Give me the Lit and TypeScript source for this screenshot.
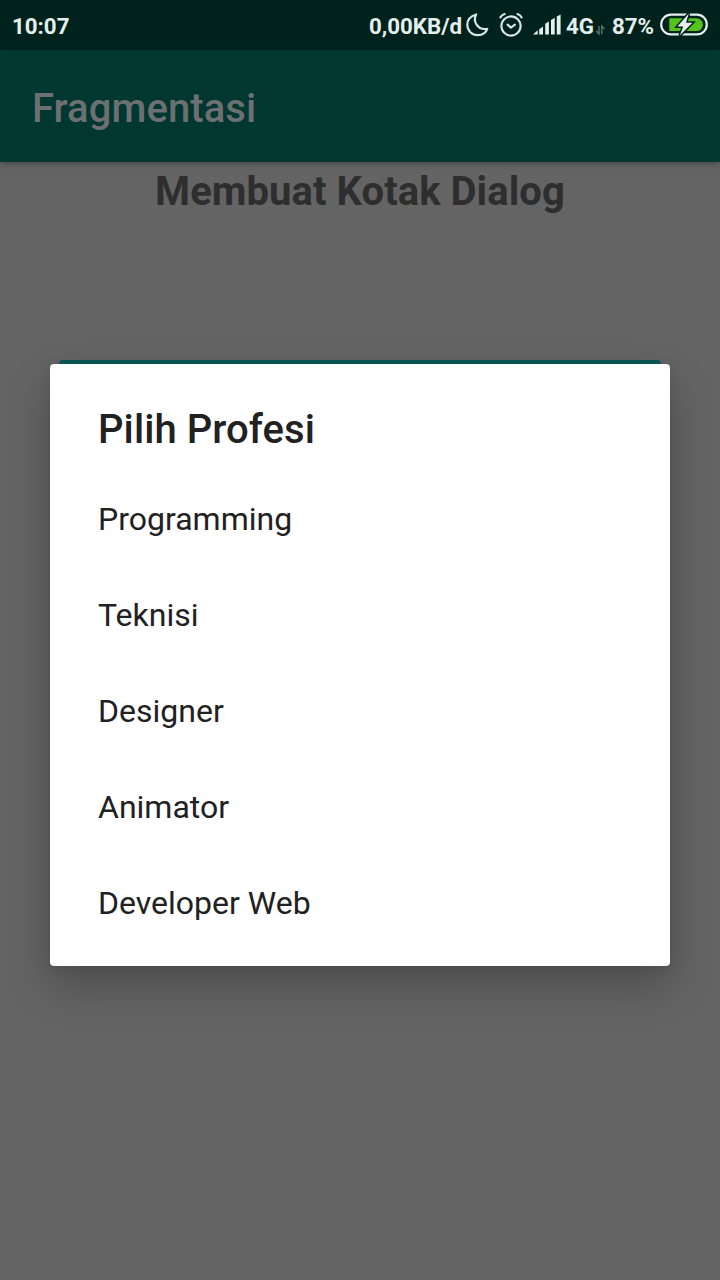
import { LitElement, html, css } from "lit";
import { customElement, property } from "lit/decorators.js";

@customElement("status-bar")
class StatusBar extends LitElement {
  static styles = css`
    :host {
      display: flex;
      align-items: center;
      height: 50px;
      box-sizing: border-box;
      padding: 0 12px;
      background: #00221d;
      color: #e4efed;
      font: 700 22.3px/28px Roboto, sans-serif;
      white-space: nowrap;
    }
    span { padding-top: 2px; }
    .clock { flex: 1; }
    .speed { width: 97px; }
    .net { width: 28px; margin-left: 5px; }
    .pct { width: 42px; margin-left: 6px; }
    svg { display: block; flex: none; }
    .moon { margin: 0 8px 0 0; }
    .alarm { margin-right: 9px; }
    .battery { margin-left: 6px; }
  `;
  render() {
    return html`
      <span class="clock">10:07</span>
      <span class="speed">0,00KB/d</span>
      <svg class="moon" width="25" height="26" viewBox="0 0 25 26" fill="none" stroke="#d7e6e3" stroke-width="2.1" stroke-linejoin="round">
        <path d="M10.2 2.4C4.7 4 1.3 7.9 1.3 12.8C1.3 18.7 6 23.1 11.8 23.1C16.5 23.1 20 20.8 21.3 16.9C16.6 17.6 12.6 16 10.4 12.4C8.4 9.1 8.5 5.4 10.2 2.4Z" />
      </svg>
      <svg class="alarm" width="25" height="26" viewBox="0 0 25 26" fill="none" stroke="#d7e6e3" stroke-width="2.1" stroke-linecap="round" stroke-linejoin="round">
        <circle cx="12" cy="14" r="9.6" />
        <path d="M8.6 12.6L11.9 15.6L15.9 12.6M1.4 5.4Q2.8 3 5.6 2.1M18.5 2.1Q21.3 3 22.6 5.4" />
      </svg>
      <svg width="28" height="26" viewBox="0 0 28 26" fill="#e4efed">
        <path d="M0 22.5L4.7 18.2V22.5ZM6.2 22.5V17.3L10 14.5V22.5ZM12.2 22.5V11.7L15.9 9.4V22.5ZM18 22.5V8L21.7 5.7V22.5ZM23.8 22.5V4.6L27.6 2.5V22.5Z" />
      </svg>
      <span class="net">4G</span>
      <svg width="12" height="26" viewBox="0 0 12 26" fill="none" stroke="#5f7b76" stroke-width="1.3">
        <path d="M5 14V22L2.5 19M7.8 22V14L10.3 17" />
      </svg>
      <span class="pct">87%</span>
      <svg class="battery" width="48" height="26" viewBox="0 0 48 26">
        <rect x="1.2" y="2.7" width="45.6" height="19.6" rx="9.8" fill="none" stroke="#e4efed" stroke-width="2.2" />
        <path d="M9.3 6.2H36.5A6.4 6.4 0 0 1 36.5 19H9.3Z" fill="#54c41b" />
        <path d="M28.8 1.4L17.4 14.4H23.2L19.8 23.6L32.4 10.7H26Z" fill="#e4efed" stroke="#00221d" stroke-width="3" paint-order="stroke" />
      </svg>
    `;
  }
}

@customElement("choice-dialog")
class ChoiceDialog extends LitElement {
  @property() heading = "";
  @property({ attribute: false }) choices: string[] = [];
  static styles = css`
    :host {
      display: block;
      box-sizing: border-box;
      height: 602px;
      padding-top: 37px;
      border-radius: 4px;
      background: #fff;
      color: #212121;
      font-family: Roboto, sans-serif;
      box-shadow: 0 20px 44px rgba(0, 0, 0, 0.24), 0 2px 12px rgba(0, 0, 0, 0.08);
    }
    h2 { margin: 0 48px; font-size: 40px; line-height: 58px; font-weight: 500; letter-spacing: 0.08px; }
    ul { margin: 12px 0 0; padding: 0; list-style: none; }
    li { display: flex; align-items: center; height: 96px; padding: 0 48px; font-size: 32px; }
  `;
  render() {
    return html`<h2>${this.heading}</h2>
      <ul>${this.choices.map((c) => html`<li>${c}</li>`)}</ul>`;
  }
}

@customElement("app-root")
class AppRoot extends LitElement {
  static styles = css`
    :host {
      display: block;
      position: relative;
      width: 720px;
      height: 1280px;
      overflow: hidden;
      background: #646464;
      font-family: Roboto, sans-serif;
    }
    header {
      display: flex;
      align-items: center;
      height: 112px;
      box-sizing: border-box;
      padding: 4px 32px 0;
      background: #003730;
      color: #6c7070;
      font-size: 40px;
      font-weight: 500;
      letter-spacing: 0.08px;
      box-shadow: 0 2px 6px rgba(0, 0, 0, 0.3);
    }
    h1 { margin: 6px 0 0; font-size: 40px; line-height: 47px; color: #2e2e2e; text-align: center; letter-spacing: 0.05px; }
    .button { height: 80px; margin: 145px 59px 0; border-radius: 4px; background: #0b5a55; }
    choice-dialog { position: absolute; left: 50px; right: 50px; top: 364px; }
  `;
  render() {
    return html`
      <status-bar></status-bar>
      <header>Fragmentasi</header>
      <h1>Membuat Kotak Dialog</h1>
      <div class="button"></div>
      <choice-dialog
        heading="Pilih Profesi"
        .choices=${["Programming", "Teknisi", "Designer", "Animator", "Developer Web"]}
      ></choice-dialog>
    `;
  }
}
